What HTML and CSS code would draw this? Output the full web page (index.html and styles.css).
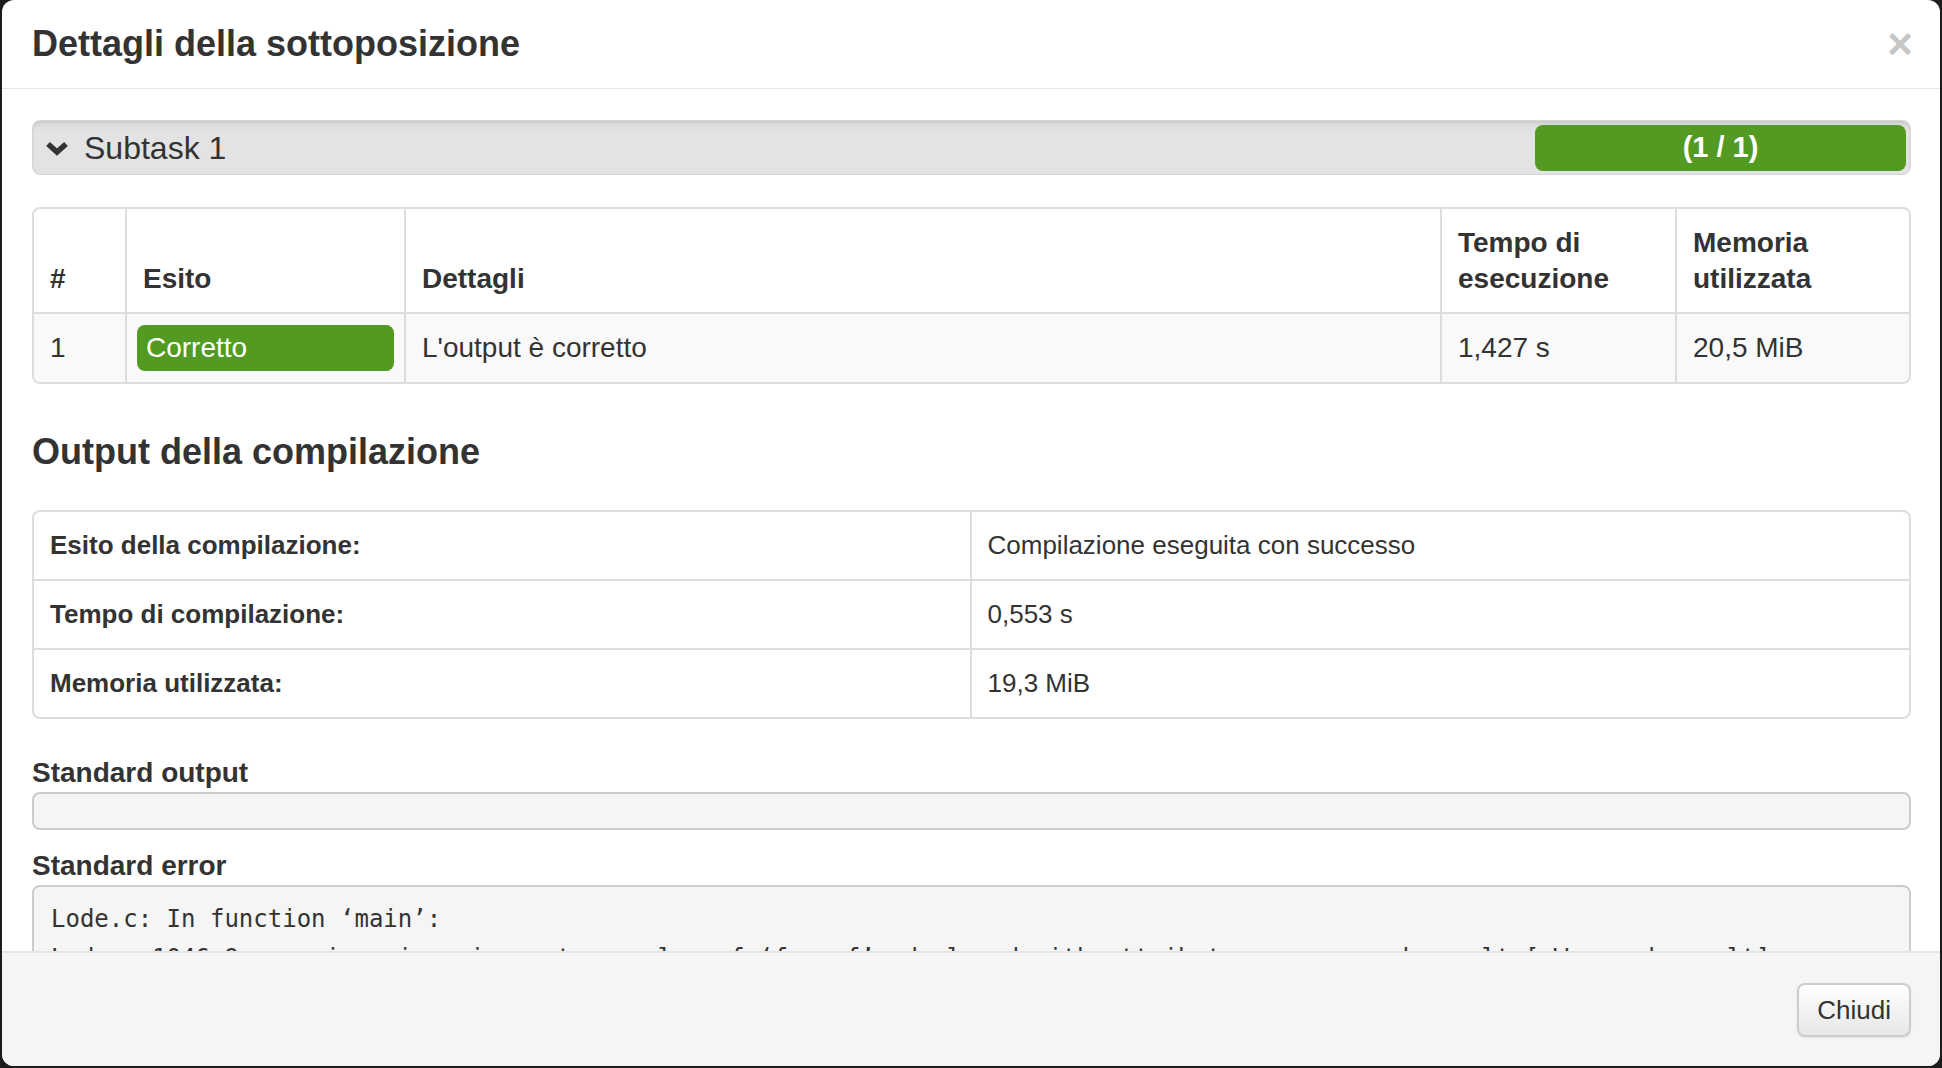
FILE: index.html
```html
<!DOCTYPE html>
<html lang="it">
<head>
<meta charset="utf-8">
<title>Dettagli della sottoposizione</title>
<link rel="stylesheet" href="styles.css">
</head>
<body>
<div class="modal">
  <div class="modal-header">
    <h4 class="modal-title">Dettagli della sottoposizione</h4>
    <span class="close">&times;</span>
  </div>
  <div class="modal-body">
    <div class="subtask">
      <div class="subtask-name">
        <svg class="chevron" width="24" height="15" viewBox="0 0 24 15"><polyline points="3,3 12,11 21,3" fill="none" stroke="#333" stroke-width="5.5" stroke-linejoin="miter" stroke-linecap="butt"/></svg>
        <span>Subtask 1</span>
      </div>
      <div class="subtask-score">(1 / 1)</div>
    </div>

    <table class="testcases">
      <thead>
        <tr>
          <th class="c-num">#</th>
          <th class="c-outcome">Esito</th>
          <th class="c-details">Dettagli</th>
          <th class="c-time">Tempo di<br>esecuzione</th>
          <th class="c-mem">Memoria<br>utilizzata</th>
        </tr>
      </thead>
      <tbody>
        <tr>
          <td>1</td>
          <td class="outcome-cell"><span class="badge-ok">Corretto</span></td>
          <td>L'output è corretto</td>
          <td>1,427 s</td>
          <td>20,5 MiB</td>
        </tr>
      </tbody>
    </table>

    <h3 class="section-title">Output della compilazione</h3>

    <table class="compile">
      <tbody>
        <tr><th>Esito della compilazione:</th><td>Compilazione eseguita con successo</td></tr>
        <tr><th>Tempo di compilazione:</th><td>0,553 s</td></tr>
        <tr><th>Memoria utilizzata:</th><td>19,3 MiB</td></tr>
      </tbody>
    </table>

    <h4 class="stream-title first">Standard output</h4>
    <pre class="stream empty"></pre>
    <h4 class="stream-title second">Standard error</h4>
    <pre class="stream">Lode.c: In function ‘main’:
Lode.c:1046:9: warning: ignoring return value of ‘fscanf’, declared with attribute warn_unused_result [-Wunused-result]
         fscanf(fr, "%d", &amp;N);
         ^</pre>
  </div>
  <div class="modal-footer">
    <button class="btn">Chiudi</button>
  </div>
</div>
</body>
</html>
```

FILE: styles.css
```css
html, body {
  margin: 0;
  padding: 0;
  background: #1c1c1c;
  height: 1068px;
  overflow: hidden;
}

.modal {
  margin: 0 2px;
  height: 1066px;
  background: #fff;
  border-radius: 12px;
  overflow: hidden;
  display: flex;
  flex-direction: column;
  font-family: "Liberation Sans", Arial, sans-serif;
  color: #333;
}

.modal-header {
  height: 88px;
  flex: none;
  border-bottom: 1px solid #e5e5e5;
  display: flex;
  align-items: center;
  justify-content: space-between;
  padding: 0 27px 0 30px;
}

.modal-title {
  margin: 0;
  font-size: 36px;
  font-weight: bold;
  line-height: 40px;
  color: #333;
}

.close {
  font-size: 44px;
  font-weight: bold;
  color: #c6c6c6;
  line-height: 40px;
}

.modal-body {
  flex: 1;
  overflow: hidden;
  padding: 31px 29px 0 30px;
}

.subtask {
  height: 55px;
  box-sizing: border-box;
  border-radius: 8px;
  background: linear-gradient(#d9d9d9, #e3e3e3 20%, #e3e3e3);
  box-shadow: inset 0 2px 3px rgba(0,0,0,0.08);
  border: 1px solid #d6d6d6;
  display: flex;
  align-items: center;
  justify-content: space-between;
  padding: 4px 4px 4px 12px;
}

.subtask-name {
  display: flex;
  align-items: center;
  gap: 15px;
  font-size: 32px;
  color: #333;
  padding-top: 2px;
}

.chevron {
  display: block;
}

.subtask-score {
  width: 371px;
  height: 46px;
  background: #529a21;
  border-radius: 8px;
  color: #fff;
  font-weight: bold;
  font-size: 29px;
  display: flex;
  align-items: center;
  justify-content: center;
}

table {
  border-collapse: separate;
  border-spacing: 0;
  width: 100%;
  border: 2px solid #dddddd;
  border-radius: 8px;
  table-layout: fixed;
}

.testcases {
  margin-top: 32px;
  font-size: 28px;
}

.testcases th {
  text-align: left;
  vertical-align: bottom;
  font-weight: bold;
  line-height: 36px;
  padding: 16px 16px 15px;
  border-left: 2px solid #dddddd;
  border-bottom: 2px solid #dddddd;
  background: #fff;
}

.testcases th:first-child, .testcases td:first-child {
  border-left: none;
}

.testcases th:first-child { border-top-left-radius: 8px; }
.testcases th:last-child { border-top-right-radius: 8px; }
.testcases td:first-child { border-bottom-left-radius: 8px; }
.testcases td:last-child { border-bottom-right-radius: 8px; }

.c-num { width: 59px; }
.c-outcome { width: 245px; }
.c-time { width: 201px; }
.c-mem { width: 200px; }

.testcases td {
  background: #f9f9f9;
  line-height: 36px;
  padding: 12px 16px;
  border-left: 2px solid #dddddd;
  vertical-align: middle;
}

.testcases td.outcome-cell {
  padding: 11px 10px;
}

.badge-ok {
  display: block;
  background: #529a21;
  color: #fff;
  border-radius: 8px;
  padding: 5px 9px;
  line-height: 36px;
}

.section-title {
  margin: 48px 0 38px;
  font-size: 36px;
  font-weight: bold;
  line-height: 40px;
}

.compile {
  font-size: 26px;
}

.compile th, .compile td {
  text-align: left;
  line-height: 36px;
  padding: 15px 15px 16px 16px;
  vertical-align: middle;
}

.compile th {
  box-sizing: border-box;
  width: 50%;
  font-weight: bold;
  border-right: 2px solid #dddddd;
}

.compile tr + tr th, .compile tr + tr td {
  border-top: 2px solid #dddddd;
}

.stream-title {
  margin: 0 0 1px;
  font-size: 28px;
  font-weight: bold;
  line-height: 36px;
}

.stream-title.first {
  margin-top: 36px;
}

.stream-title.second {
  margin-top: 18px;
}

.stream {
  margin: 0;
  background: #f5f5f5;
  border: 2px solid #cccccc;
  border-radius: 8px;
  padding: 13px 17px;
  font-family: "DejaVu Sans Mono", "Liberation Mono", monospace;
  font-size: 24px;
  line-height: 39px;
  color: #333;
  white-space: pre;
  overflow: hidden;
}

.stream.empty {
  height: 0;
  padding: 17px;
}

.modal-footer {
  flex: none;
  height: 113px;
  border-top: 2px solid #e5e5e5;
  background: #f5f5f5;
  display: flex;
  align-items: center;
  justify-content: flex-end;
  padding: 0 29px 0 30px;
}

.btn {
  font-family: "Liberation Sans", Arial, sans-serif;
  font-size: 26px;
  color: #333;
  height: 54px;
  padding: 0 18px;
  border: 2px solid #cccccc;
  border-radius: 8px;
  background: linear-gradient(#ffffff, #e6e6e6);
  box-shadow: 0 1px 2px rgba(0,0,0,0.08);
  margin-top: 1px;
}
```
